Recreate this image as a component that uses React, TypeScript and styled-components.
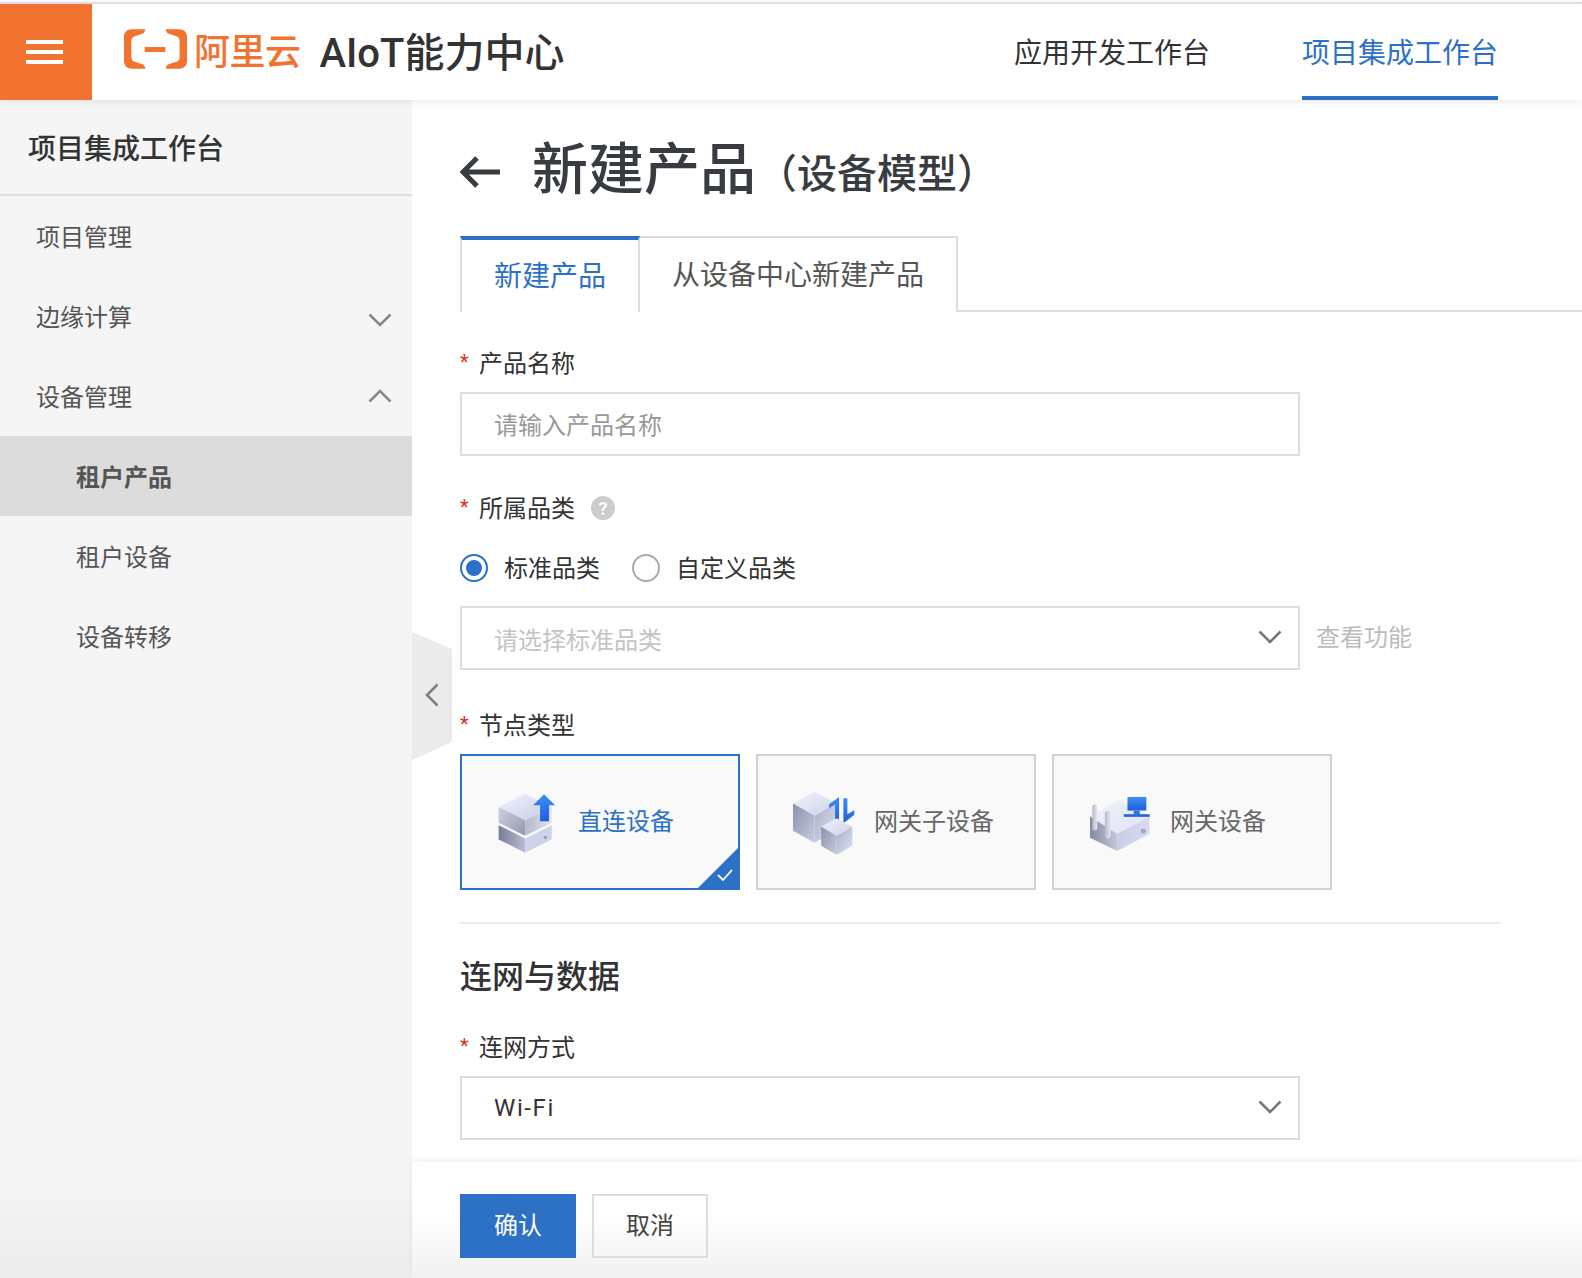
import React from "react";
import styled, { createGlobalStyle } from "styled-components";

const GlobalStyle = createGlobalStyle`
  html, body {
    margin: 0;
    padding: 0;
    background: #fff;
  }
  * {
    box-sizing: border-box;
  }
  body {
    font-family: "Roboto", "Noto Sans CJK SC", sans-serif;
    color: #333;
  }
`;

const blue = "#2d71c6";
const orange = "#f27330";
const line = "#dddddd";

const Page = styled.div`
  width: 1582px;
  height: 1278px;
  padding-top: 2px;
  display: flex;
  flex-direction: column;
  overflow: hidden;
`;

const Header = styled.header`
  height: 98px;
  flex: none;
  display: flex;
  align-items: stretch;
  border-top: 2px solid #dcdce6;
  background: #fff;
  box-shadow: 0 2px 8px rgba(0, 0, 0, 0.08);
  position: relative;
  z-index: 3;
`;

const MenuButton = styled.div`
  width: 92px;
  padding-right: 3px;
  background: ${orange};
  display: flex;
  flex-direction: column;
  align-items: center;
  justify-content: center;
  gap: 6px;
`;

const MenuBar = styled.span`
  width: 37px;
  height: 4px;
  background: #fff;
`;

const Brand = styled.div`
  display: flex;
  align-items: center;
  margin-left: 32px;
  padding-bottom: 4px;
`;

const LogoMark = styled.svg`
  margin-bottom: 2px;
`;

const BrandName = styled.span`
  margin-left: 7px;
  margin-bottom: 2px;
  font-size: 36px;
  font-weight: 500;
  color: ${orange};
  letter-spacing: -0.5px;
`;

const ProductName = styled.span`
  margin-left: 19px;
  font-size: 40px;
  font-weight: 500;
  color: #333;
`;

const TopNav = styled.nav`
  margin-left: auto;
  margin-right: 84px;
  display: flex;
  gap: 92px;
`;

const TopNavItem = styled.a<{ $active?: boolean }>`
  display: flex;
  align-items: center;
  font-size: 28px;
  color: ${(p) => (p.$active ? blue : "#333")};
  border-bottom: 4px solid ${(p) => (p.$active ? blue : "transparent")};
  padding-top: 2px;
`;

const Body = styled.div`
  flex: 1;
  min-height: 0;
  display: flex;
`;

const Sidebar = styled.aside`
  width: 412px;
  flex: none;
  position: relative;
  background: linear-gradient(to bottom, #f5f5f5 0, #f5f5f5 1080px, #ececec 100%);
`;

const SideTitle = styled.div`
  height: 96px;
  padding: 0 0 1px 28px;
  display: flex;
  align-items: center;
  font-size: 28px;
  font-weight: 500;
  color: #333;
  border-bottom: 2px solid #dedede;
`;

const SideItem = styled.div<{ $sub?: boolean; $active?: boolean }>`
  height: 80px;
  padding: 0 20px 2px ${(p) => (p.$sub ? 76 : 36)}px;
  display: flex;
  align-items: center;
  justify-content: space-between;
  font-size: 24px;
  font-weight: ${(p) => (p.$active ? 700 : 400)};
  color: #555;
  background: ${(p) => (p.$active ? "#dcdcdc" : "transparent")};
`;

const ChevronIcon = styled.svg<{ $nudge?: number }>`
  margin-top: ${(p) => p.$nudge ?? 0}px;
`;

const Collapse = styled.div`
  position: absolute;
  left: 412px;
  top: 532px;
  width: 40px;
  height: 128px;
  padding-bottom: 2px;
  background: #ebebeb;
  clip-path: polygon(0 0, 100% 17px, 100% 110px, 0 100%);
  display: flex;
  align-items: center;
  justify-content: center;
  z-index: 2;
`;

const Main = styled.main`
  flex: 1;
  min-width: 0;
  display: flex;
  flex-direction: column;
  background: #fff;
`;

const Form = styled.div`
  flex: 1;
  min-height: 0;
  padding-left: 48px;
`;

const TitleRow = styled.div`
  height: 72px;
  margin-top: 36px;
  display: flex;
  align-items: center;
`;

const Title = styled.h1`
  margin: 0 0 16px 32px;
  font-size: 56px;
  font-weight: 500;
  color: #383c40;
`;

const TitleNote = styled.span`
  font-size: 40px;
  font-weight: 500;
  margin-left: 1px;
  padding-bottom: 2px;
  color: #383c40;
`;

const Tabs = styled.div`
  height: 76px;
  margin-top: 28px;
  display: flex;
  border-bottom: 2px solid ${line};
`;

const Tab = styled.div<{ $active?: boolean }>`
  height: 76px;
  padding: 0 32px 4px;
  display: flex;
  align-items: center;
  font-size: 28px;
  color: ${(p) => (p.$active ? blue : "#555")};
  background: #fff;
  border-style: solid;
  border-color: ${line};
  border-width: 2px 2px 0 ${(p) => (p.$active ? 2 : 0)}px;
  border-top: ${(p) => (p.$active ? `4px solid ${blue}` : `2px solid ${line}`)};
`;

const Label = styled.div<{ $top: number }>`
  height: 32px;
  padding-bottom: 4px;
  margin-top: ${(p) => p.$top}px;
  display: flex;
  align-items: center;
  font-size: 24px;
  color: #333;
`;

const Star = styled.span`
  width: 19px;
  margin-top: 2px;
  color: #d93026;
  font-size: 20px;
`;

const Help = styled.span`
  width: 24px;
  height: 24px;
  margin: 4px 0 0 16px;
  border-radius: 50%;
  background: #cccccc;
  color: #fff;
  font-size: 18px;
  font-weight: 700;
  display: flex;
  align-items: center;
  justify-content: center;
`;

const InputBox = styled.div<{ $top?: number }>`
  width: 840px;
  height: 64px;
  margin-top: ${(p) => p.$top ?? 13}px;
  padding: 0 16px 2px 32px;
  border: 2px solid ${line};
  background: #fff;
  display: flex;
  align-items: center;
  justify-content: space-between;
  font-size: 24px;
`;

const Placeholder = styled.span<{ $light?: boolean }>`
  margin-top: ${(p) => (p.$light ? 2 : 0)}px;
  color: ${(p) => (p.$light ? "#c4c4c4" : "#999")};
`;

const InputValue = styled.span`
  margin-top: 2px;
  letter-spacing: 1.6px;
  color: #333;
`;

const RadioRow = styled.div`
  height: 32px;
  margin-top: 28px;
  display: flex;
  align-items: center;
  font-size: 24px;
  color: #333;
`;

const Radio = styled.span<{ $checked?: boolean }>`
  width: 28px;
  height: 28px;
  margin-right: 16px;
  border-radius: 50%;
  border: 2px solid ${(p) => (p.$checked ? blue : "#aaa")};
  display: flex;
  align-items: center;
  justify-content: center;
  &::after {
    content: "";
    width: 16px;
    height: 16px;
    border-radius: 50%;
    background: ${(p) => (p.$checked ? blue : "transparent")};
  }
`;

const RadioText = styled.span`
  margin: -4px 32px 0 0;
`;

const SelectRow = styled.div`
  display: flex;
  align-items: center;
  margin-top: 22px;
`;

const SideLink = styled.span`
  margin-left: 16px;
  margin-top: -6px;
  font-size: 24px;
  color: #bbbbbb;
`;

const Cards = styled.div`
  margin-top: 13px;
  display: flex;
  gap: 16px;
`;

const Card = styled.div<{ $active?: boolean }>`
  width: 280px;
  height: 136px;
  padding-left: 34px;
  position: relative;
  display: flex;
  align-items: center;
  font-size: 24px;
  background: #f9f9f9;
  color: ${(p) => (p.$active ? blue : "#666")};
  border: 2px solid ${(p) => (p.$active ? blue : "#d2d2d2")};
`;

const CardText = styled.span<{ $gap: number }>`
  margin-left: ${(p) => p.$gap}px;
  margin-top: -5px;
`;

const CardCorner = styled.div`
  position: absolute;
  right: 0;
  bottom: 0;
  width: 40px;
  height: 40px;
  background: ${blue};
  clip-path: polygon(100% 0, 100% 100%, 0 100%);
  display: flex;
  align-items: flex-end;
  justify-content: flex-end;
  padding: 0 5px 7px 0;
`;

const Divider = styled.div`
  width: 1040px;
  height: 2px;
  margin-top: 32px;
  background: #ececec;
`;

const SectionTitle = styled.h2`
  height: 44px;
  padding-bottom: 4px;
  margin: 30px 0 0;
  display: flex;
  align-items: center;
  font-size: 32px;
  font-weight: 500;
  color: #333;
`;

const Footer = styled.footer`
  height: 116px;
  flex: none;
  padding: 32px 0 0 48px;
  display: flex;
  align-items: flex-start;
  gap: 16px;
  background: linear-gradient(to bottom, #fff 0, #fff 50px, #f1f1f1 100%);
  box-shadow: 0 -2px 6px rgba(0, 0, 0, 0.07);
  position: relative;
`;

const Button = styled.button<{ $primary?: boolean }>`
  width: 116px;
  height: 64px;
  padding: 0 0 5px;
  font-family: inherit;
  font-size: 24px;
  color: ${(p) => (p.$primary ? "#fff" : "#444")};
  background: ${(p) => (p.$primary ? blue : "transparent")};
  border: ${(p) => (p.$primary ? "none" : `2px solid ${line}`)};
`;

function Chevron({ up, color = "#888", nudge }: { up?: boolean; color?: string; nudge?: number }) {
  return (
    <ChevronIcon $nudge={nudge} width="24" height="14" viewBox="0 0 24 14" fill="none">
      <path
        d={up ? "M1.5 12.5 12 2l10.5 10.5" : "M1.5 1.5 12 12 22.5 1.5"}
        stroke={color}
        strokeWidth="2.6"
      />
    </ChevronIcon>
  );
}

function Logo() {
  return (
    <LogoMark width="63" height="40" viewBox="0 0 64 40">
      <path
        d="M22 0H8C3 0 0 3 0 8v24c0 5 3 8 8 8h14l-2-4-9-3c-2.500-.8-3.500-2.500-3.500-5V12c0-2.500 1-4.200 3.500-5l9-3z"
        fill={orange}
      />
      <path
        d="M42 0h14c5 0 8 3 8 8v24c0 5-3 8-8 8H42l2-4 9-3c2.500-.8 3.500-2.500 3.500-5V12c0-2.500-1-4.200-3.500-5l-9-3z"
        fill={orange}
      />
      <rect x="21" y="18" width="21" height="5" fill={orange} />
    </LogoMark>
  );
}

function DirectIcon() {
  return (
    <svg width="63" height="67" viewBox="140 147 190 200">
      <defs>
        <linearGradient id="d1" x1="0" y1="0" x2="1" y2="1">
          <stop offset="0" stopColor="#f0f2fb" />
          <stop offset="1" stopColor="#c6cce6" />
        </linearGradient>
        <linearGradient id="d2" x1="0" y1="0" x2="1" y2="1">
          <stop offset="0" stopColor="#cdd0de" />
          <stop offset="1" stopColor="#9498ae" />
        </linearGradient>
        <linearGradient id="d3" x1="0" y1="0" x2="1" y2="0">
          <stop offset="0" stopColor="#b4b8cc" />
          <stop offset="1" stopColor="#e0e3f1" />
        </linearGradient>
        <linearGradient id="d4" x1="0" y1="0" x2="1" y2="0">
          <stop offset="0" stopColor="#777c95" />
          <stop offset="1" stopColor="#b8bcd2" />
        </linearGradient>
        <linearGradient id="d5" x1="0" y1="0" x2="0" y2="1">
          <stop offset="0" stopColor="#3f8df7" />
          <stop offset="1" stopColor="#1f5fd8" />
        </linearGradient>
      </defs>
      <polygon points="148,200 228,160 308,200 228,240" fill="url(#d1)" />
      <polygon points="148,200 228,240 228,287 148,248" fill="url(#d2)" />
      <polygon points="228,240 308,200 308,248 228,287" fill="url(#d3)" />
      <polygon points="148,255 228,295 228,338 148,298" fill="url(#d4)" />
      <polygon points="228,295 308,255 308,298 228,338" fill="#ced3e8" />
      <circle cx="289" cy="292" r="4" fill="#8a8fa6" />
      <polygon
        points="285,162 318,195 300,195 300,243 273,243 273,195 252,195"
        fill="url(#d5)"
      />
    </svg>
  );
}

function GatewayChildIcon() {
  return (
    <svg width="63" height="67" viewBox="140 145 190 200">
      <defs>
        <linearGradient id="c1" x1="0" y1="0" x2="1" y2="1">
          <stop offset="0" stopColor="#f0f2fb" />
          <stop offset="1" stopColor="#ccd2ea" />
        </linearGradient>
        <linearGradient id="c2" x1="0" y1="0" x2="1" y2="1">
          <stop offset="0" stopColor="#8d91aa" />
          <stop offset="1" stopColor="#c6cbe0" />
        </linearGradient>
        <linearGradient id="c3" x1="0" y1="0" x2="1" y2="1">
          <stop offset="0" stopColor="#a9aec6" />
          <stop offset="1" stopColor="#dde1f2" />
        </linearGradient>
        <linearGradient id="c4" x1="0" y1="0" x2="0" y2="1">
          <stop offset="0" stopColor="#3f8df7" />
          <stop offset="1" stopColor="#1f5fd8" />
        </linearGradient>
      </defs>
      <polygon points="143,188 208,152 272,188 208,225" fill="url(#c1)" />
      <polygon points="143,188 208,225 208,306 143,270" fill="url(#c2)" />
      <polygon points="208,225 272,188 272,270 208,306" fill="url(#c3)" />
      <polygon points="270,243 282,243 282,168 252,190 252,202 270,190" fill="url(#c4)" />
      <polygon points="295,172 307,172 307,220 328,208 328,222 295,247" fill="url(#c4)" />
      <polygon points="228,258 275,232 322,258 275,285" fill="url(#c1)" />
      <polygon points="228,258 275,285 275,342 228,315" fill="url(#c2)" />
      <polygon points="275,285 322,258 322,315 275,342" fill="url(#c3)" />
    </svg>
  );
}

function GatewayIcon() {
  return (
    <svg width="63" height="67" viewBox="144 150 190 200">
      <defs>
        <linearGradient id="g1" x1="0" y1="0" x2="1" y2="1">
          <stop offset="0" stopColor="#f0f2fb" />
          <stop offset="1" stopColor="#dfe3f4" />
        </linearGradient>
        <linearGradient id="g2" x1="0" y1="0" x2="1" y2="0">
          <stop offset="0" stopColor="#858aa4" />
          <stop offset="1" stopColor="#c4c8dc" />
        </linearGradient>
        <linearGradient id="g3" x1="0" y1="0" x2="1" y2="0">
          <stop offset="0" stopColor="#c8cde4" />
          <stop offset="1" stopColor="#d8dcee" />
        </linearGradient>
        <linearGradient id="g4" x1="0" y1="0" x2="1" y2="0">
          <stop offset="0" stopColor="#b4b8ca" />
          <stop offset="1" stopColor="#e6e8f0" />
        </linearGradient>
        <linearGradient id="g5" x1="0" y1="0" x2="0" y2="1">
          <stop offset="0" stopColor="#3f8df7" />
          <stop offset="1" stopColor="#1f5fd8" />
        </linearGradient>
      </defs>
      <polygon points="150,232 240,182 330,232 232,284" fill="url(#g1)" />
      <polygon points="150,232 232,284 232,336 150,296" fill="url(#g2)" />
      <polygon points="232,284 330,232 330,284 232,336" fill="url(#g3)" />
      <circle cx="311" cy="276" r="8" fill="#a5aac2" />
      <rect x="157" y="196" width="15" height="78" rx="7" fill="url(#g4)" />
      <rect x="195" y="215" width="17" height="84" rx="8" fill="url(#g4)" />
      <rect x="263" y="173" width="57" height="41" fill="url(#g5)" />
      <rect x="282" y="214" width="18" height="12" fill="#2f74e6" />
      <rect x="252" y="225" width="78" height="8" fill="#2566de" />
    </svg>
  );
}

function BackArrow() {
  return (
    <svg width="40" height="32" viewBox="0 0 40 32" fill="none">
      <path d="M40 16H4M17 2 3 16l14 14" stroke="#383c40" strokeWidth="5" />
    </svg>
  );
}

function Field({ top, text }: { top: number; text: string }) {
  return (
    <Label $top={top}>
      <Star>*</Star>
      {text}
    </Label>
  );
}

function App() {
  return (
    <Page>
      <GlobalStyle />
      <Header>
        <MenuButton>
          <MenuBar />
          <MenuBar />
          <MenuBar />
        </MenuButton>
        <Brand>
          <Logo />
          <BrandName>阿里云</BrandName>
          <ProductName>AIoT能力中心</ProductName>
        </Brand>
        <TopNav>
          <TopNavItem>应用开发工作台</TopNavItem>
          <TopNavItem $active>项目集成工作台</TopNavItem>
        </TopNav>
      </Header>
      <Body>
        <Sidebar>
          <SideTitle>项目集成工作台</SideTitle>
          <SideItem>项目管理</SideItem>
          <SideItem>
            边缘计算
            <Chevron nudge={10} />
          </SideItem>
          <SideItem>
            设备管理
            <Chevron up nudge={2} />
          </SideItem>
          <SideItem $sub $active>
            租户产品
          </SideItem>
          <SideItem $sub>租户设备</SideItem>
          <SideItem $sub>设备转移</SideItem>
          <Collapse>
            <svg width="14" height="24" viewBox="0 0 14 24" fill="none">
              <path d="M12.500 1.500 2 12l10.500 10.500" stroke="#808080" strokeWidth="2.600" />
            </svg>
          </Collapse>
        </Sidebar>
        <Main>
          <Form>
            <TitleRow>
              <BackArrow />
              <Title>新建产品</Title>
              <TitleNote>（设备模型）</TitleNote>
            </TitleRow>
            <Tabs>
              <Tab $active>新建产品</Tab>
              <Tab>从设备中心新建产品</Tab>
            </Tabs>
            <Field top={35} text="产品名称" />
            <InputBox>
              <Placeholder>请输入产品名称</Placeholder>
            </InputBox>
            <Label $top={36}>
              <Star>*</Star>
              所属品类
              <Help>?</Help>
            </Label>
            <RadioRow>
              <Radio $checked />
              <RadioText>标准品类</RadioText>
              <Radio />
              <RadioText>自定义品类</RadioText>
            </RadioRow>
            <SelectRow>
              <InputBox $top={0}>
                <Placeholder $light>请选择标准品类</Placeholder>
                <Chevron color="#777" />
              </InputBox>
              <SideLink>查看功能</SideLink>
            </SelectRow>
            <Field top={39} text="节点类型" />
            <Cards>
              <Card $active>
                <DirectIcon />
                <CardText $gap={19}>直连设备</CardText>
                <CardCorner>
                  <svg width="16" height="12" viewBox="0 0 16 12" fill="none">
                    <path d="M1 6l5 5 9-10" stroke="#fff" strokeWidth="1.800" />
                  </svg>
                </CardCorner>
              </Card>
              <Card>
                <GatewayChildIcon />
                <CardText $gap={19}>网关子设备</CardText>
              </Card>
              <Card>
                <GatewayIcon />
                <CardText $gap={19}>网关设备</CardText>
              </Card>
            </Cards>
            <Divider />
            <SectionTitle>连网与数据</SectionTitle>
            <Field top={33} text="连网方式" />
            <InputBox>
              <InputValue>Wi-Fi</InputValue>
              <Chevron color="#777" />
            </InputBox>
          </Form>
          <Footer>
            <Button $primary>确认</Button>
            <Button>取消</Button>
          </Footer>
        </Main>
      </Body>
    </Page>
  );
}

export default App;
